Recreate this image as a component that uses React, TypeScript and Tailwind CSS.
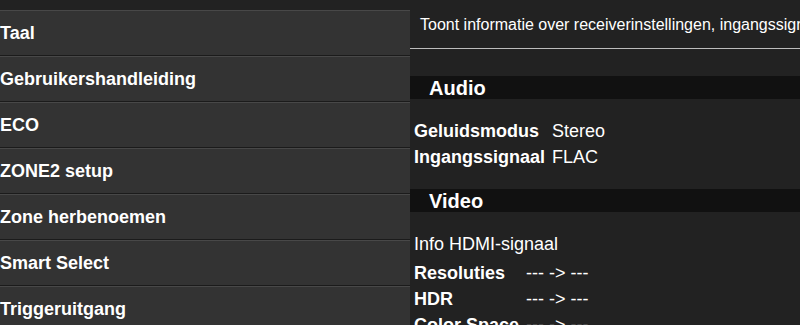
import React from "react";

const menuItems = [
  "Taal",
  "Gebruikershandleiding",
  "ECO",
  "ZONE2 setup",
  "Zone herbenoemen",
  "Smart Select",
  "Triggeruitgang",
];

const audioRows = [
  { label: "Geluidsmodus", value: "Stereo" },
  { label: "Ingangssignaal", value: "FLAC" },
];

const videoRows = [
  { label: "Resoluties", value: "--- -> ---" },
  { label: "HDR", value: "--- -> ---" },
  { label: "Color Space", value: "--- -> ---" },
];

const SectionBar = ({ title }: { title: string }) => (
  <div className="h-[23px] shrink-0 bg-[#111111] pl-[19px] flex items-center">
    <span className="text-[20px] font-bold text-white leading-none">{title}</span>
  </div>
);

const InfoTable = ({ rows }: { rows: { label: string; value: string }[] }) => (
  <div className="grid grid-cols-[auto_1fr] gap-x-[7px] pl-[4px] shrink-0">
    {rows.map((r) => (
      <React.Fragment key={r.label}>
        <div className="h-[26px] flex items-center font-bold text-[18px] text-white whitespace-nowrap">
          {r.label}
        </div>
        <div className="h-[26px] flex items-center text-[18px] text-white whitespace-nowrap">
          {r.value}
        </div>
      </React.Fragment>
    ))}
  </div>
);

export default function App() {
  return (
    <div
      className="w-[800px] h-[325px] overflow-hidden bg-[#222222] flex"
      style={{ fontFamily: '"Liberation Sans", Arial, sans-serif' }}
    >
      {/* Menu list */}
      <div className="w-[410px] shrink-0 flex flex-col pt-[10px] bg-[#222222]">
        {menuItems.map((item) => (
          <div
            key={item}
            className="h-[46px] shrink-0 bg-[#333333] border-t border-t-[#484848] border-b border-b-[#1b1b1b] flex items-center"
          >
            <span className="text-[18px] font-bold text-white whitespace-nowrap">{item}</span>
          </div>
        ))}
      </div>

      {/* Info panel */}
      <div className="flex-1 min-w-0 flex flex-col bg-[#222222] overflow-hidden">
        <div className="h-[49px] shrink-0 flex items-center pl-[10px] pt-[1px] border-b border-b-[#bdbdbd]">
          <span className="text-[16px] text-white whitespace-nowrap">
            Toont informatie over receiverinstellingen, ingangssignalen en uitgangssignalen.
          </span>
        </div>
        <div className="mt-[27px] shrink-0">
          <SectionBar title="Audio" />
        </div>
        <div className="mt-[19px] shrink-0">
          <InfoTable rows={audioRows} />
        </div>
        <div className="mt-[19px] shrink-0">
          <SectionBar title="Video" />
        </div>
        <div className="mt-[19px] shrink-0 pl-[4px] h-[26px] flex items-center text-[18px] text-white whitespace-nowrap">
          Info HDMI-signaal
        </div>
        <div className="mt-[3px] shrink-0">
          <InfoTable rows={videoRows} />
        </div>
      </div>
    </div>
  );
}
